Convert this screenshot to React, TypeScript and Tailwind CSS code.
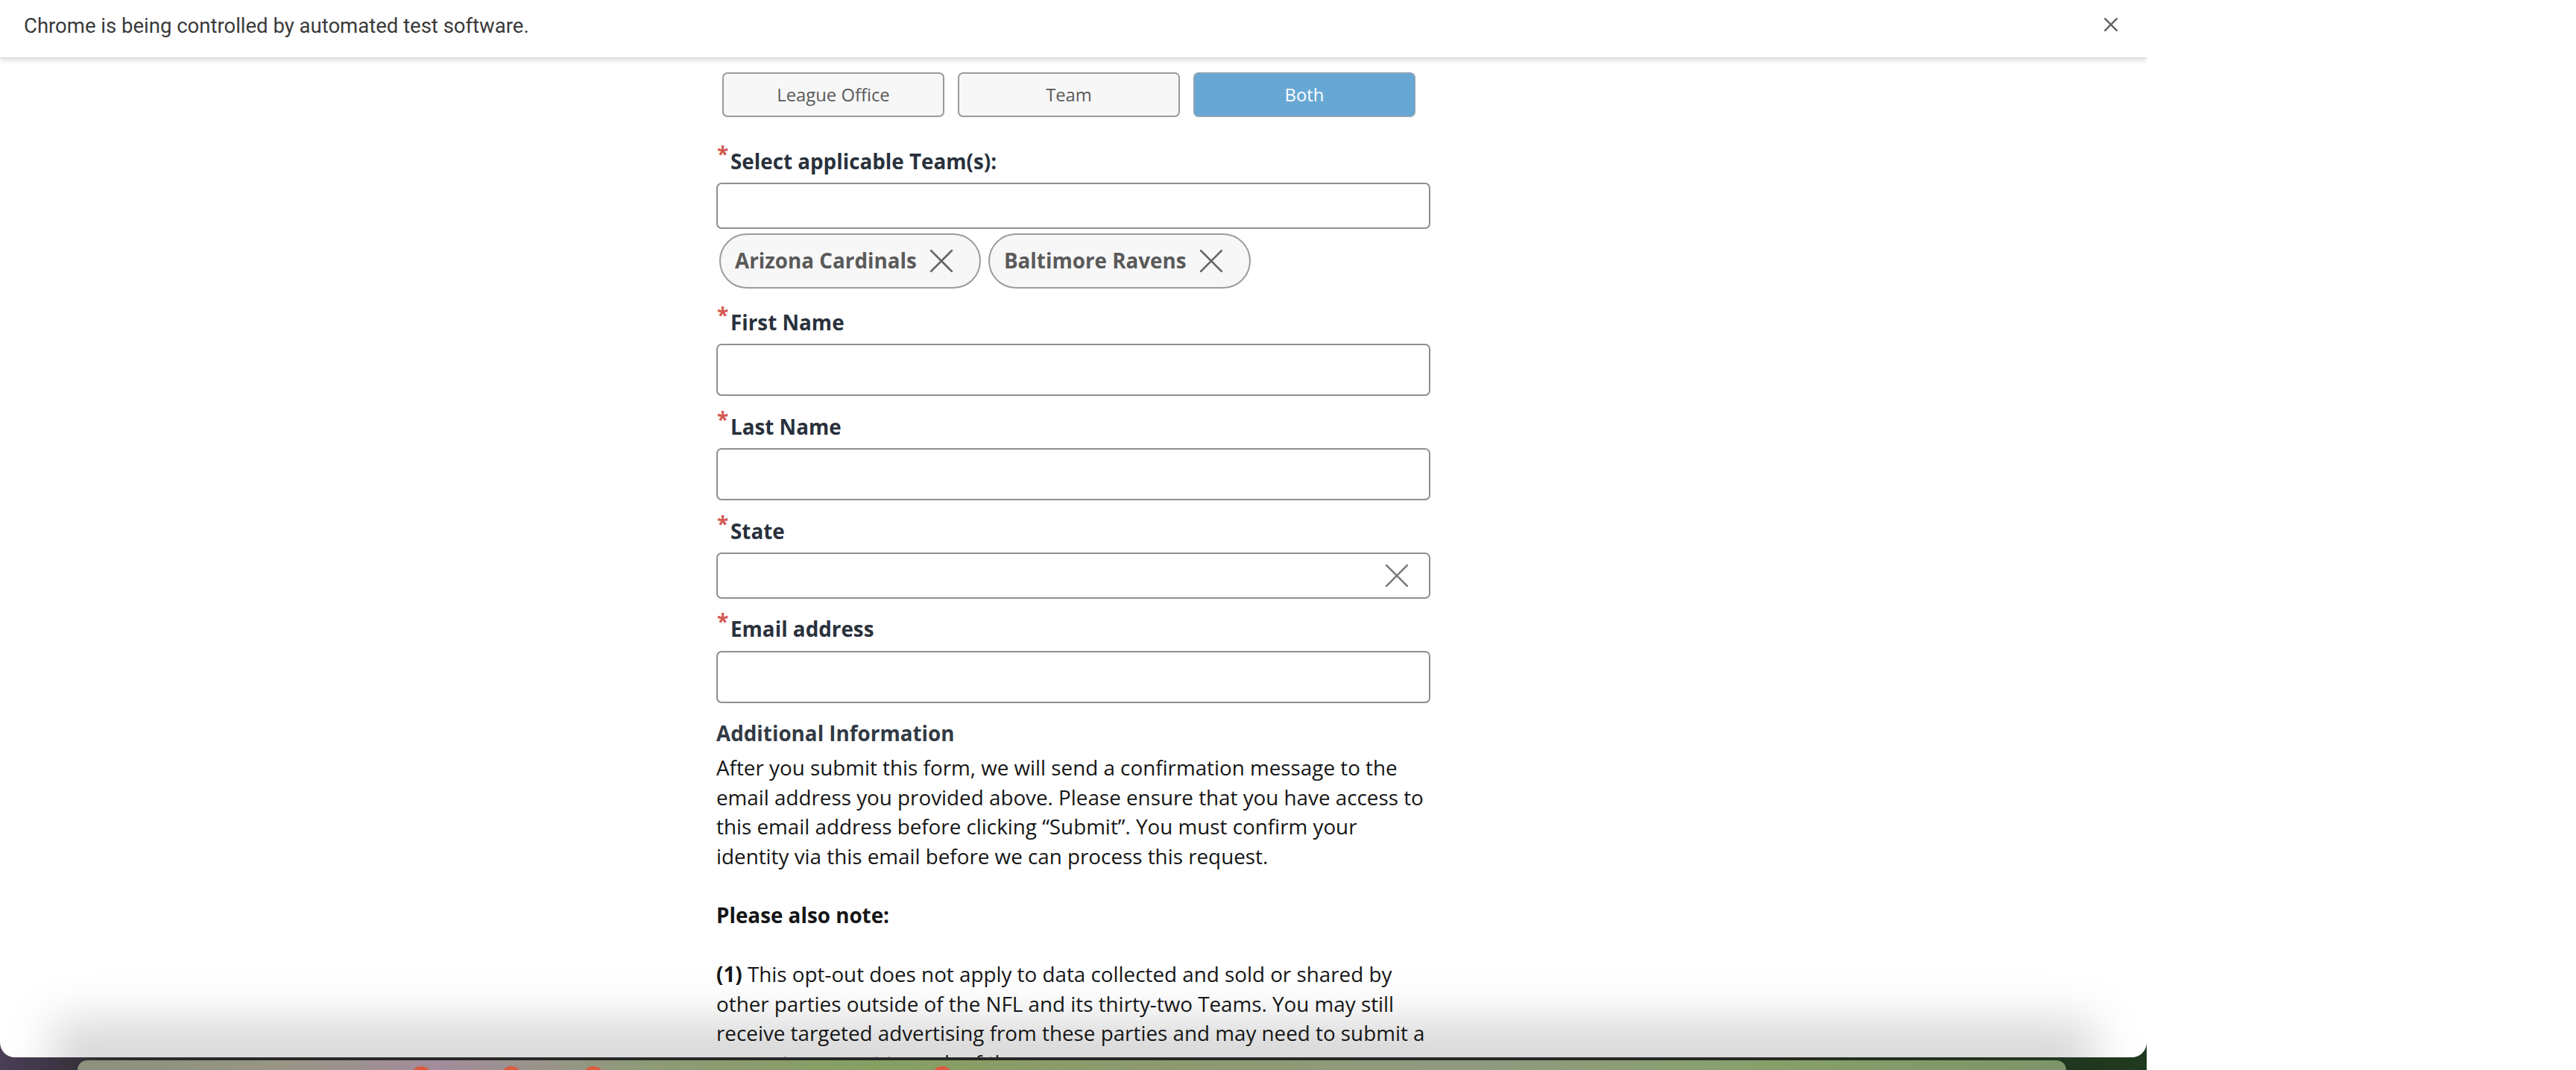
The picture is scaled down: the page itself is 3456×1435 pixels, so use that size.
import React from 'react';

// thin "x" used by chips, the state select and the infobar
function Cross({ size, color, width = 2.5 }: { size: number; color: string; width?: number }) {
  return (
    <svg width={size} height={size} viewBox="0 0 30 30" fill="none">
      <path d="M2 2L28 28M28 2L2 28" stroke={color} strokeWidth={width} strokeLinecap="round" />
    </svg>
  );
}

function Label({ text }: { text: string }) {
  return (
    <div className="flex items-start h-[36px] text-[27.8px] leading-[36px] font-bold text-[#29313c]">
      <span className="text-[28px] leading-none text-[#d4574f] mt-[-6px] w-[19px] pl-[1px]">*</span>
      <span>{text}</span>
    </div>
  );
}

function Field({ h, clear }: { h: number; clear?: boolean }) {
  return (
    <div
      className={
        'w-full border-2 border-[#8f8f8f] rounded-[7px] bg-white flex items-center justify-end pr-[27px] ' +
        (h === 62 ? 'h-[62px]' : 'h-[70px]')
      }
    >
      {clear && <Cross size={32} color="#7a7a7a" width={2.4} />}
    </div>
  );
}

function Chip({ name }: { name: string }) {
  return (
    <div className="h-[74px] flex items-center gap-[17px] rounded-full border-2 border-[#9b9b9b] bg-[#f7f7f7] pl-[19px] pr-[35px] text-[27.8px] font-bold text-[#5a5a5a]">
      <span>{name}</span>
      <Cross size={32} color="#666666" width={2.6} />
    </div>
  );
}

export default function App() {
  const toggles = ['League Office', 'Team', 'Both'];

  return (
    <div className="w-[3456px] h-[1435px] bg-white flex overflow-hidden" style={{ fontFamily: '"Open Sans", "Noto Sans", sans-serif' }}>
      {/* browser window + desktop peeking underneath */}
      <div className="w-[2880px] h-full flex flex-col bg-[linear-gradient(90deg,#4b3e57_0%,#2a2a2a_6%,#272725_80%,#1f3a1e_100%)]">
        <div className="flex-1 min-h-0 bg-white rounded-b-[20px] flex flex-col overflow-hidden relative">
          {/* automation infobar */}
          <div className="h-[78px] shrink-0 flex items-center justify-between pl-[32px] pr-[39px] border-b border-[#d6d6d6] shadow-[0_3px_7px_rgba(0,0,0,0.14)] relative z-20 bg-white">
            <span className="text-[27.5px] text-[#3a3a3a] mt-[-8px]" style={{ fontFamily: 'Roboto, "Liberation Sans", sans-serif' }}>
              Chrome is being controlled by automated test software.
            </span>
            <div className="mt-[-12px]">
              <Cross size={18} color="#5f6368" width={4} />
            </div>
          </div>

          {/* bottom fade of the window */}
          <div className="absolute left-[70px] right-[70px] bottom-[-50px] h-[100px] bg-[#d8d8d8] blur-[30px] pointer-events-none" />

          <div className="relative z-10 w-[958px] mx-auto pt-[19px]">
            <div className="flex gap-[18px] ml-[8px]">
              {toggles.map((t) => (
                <div
                  key={t}
                  className={
                    'w-[298px] h-[60px] rounded-[7px] border-2 flex items-center justify-center text-[23.8px] pt-[2px] ' +
                    (t === 'Both'
                      ? 'bg-[#67a7d4] border-[#8aa4b8] text-white'
                      : 'bg-[#f7f7f7] border-[#9a9a9a] text-[#5a5a5a]')
                  }
                >
                  {t}
                </div>
              ))}
            </div>

            <div className="mt-[41px]">
              <Label text="Select applicable Team(s):" />
            </div>
            <div className="mt-[11px]">
              <Field h={62} />
            </div>
            <div className="mt-[6px] flex gap-[10px] ml-[4px]">
              <Chip name="Arizona Cardinals" />
              <Chip name="Baltimore Ravens" />
            </div>

            <div className="mt-[27px]">
              <Label text="First Name" />
            </div>
            <div className="mt-[11px]">
              <Field h={70} />
            </div>

            <div className="mt-[23px]">
              <Label text="Last Name" />
            </div>
            <div className="mt-[11px]">
              <Field h={70} />
            </div>

            <div className="mt-[23px]">
              <Label text="State" />
            </div>
            <div className="mt-[11px]">
              <Field h={62} clear />
            </div>

            <div className="mt-[22px]">
              <Label text="Email address" />
            </div>
            <div className="mt-[12px]">
              <Field h={70} />
            </div>

            <div className="mt-[22px] text-[27.8px] leading-[36px] font-bold text-[#323a44]">Additional Information</div>

            <div className="mt-[9px] text-[27.8px] leading-[39.6px] text-[#151515]">
              <p>
                After you submit this form, we will send a confirmation message to the email address you provided
                above. Please ensure that you have access to this email address before clicking “Submit”. You must
                confirm your identity via this email before we can process this request.
              </p>
              <p className="mt-[39.6px] font-bold">Please also note:</p>
              <p className="mt-[39.6px]">
                <span className="font-bold">(1)</span> This opt-out does not apply to data collected and sold or shared
                by other parties outside of the NFL and its thirty-two Teams. You may still receive targeted advertising
                from these parties and may need to submit a separate request to each of them.
              </p>
            </div>
          </div>
        </div>

        {/* desktop strip with dock */}
        <div className="h-[17px] shrink-0 pt-[4px] pl-[104px]">
          <div className="relative w-[2668px] h-[13px] rounded-tl-[30px] rounded-tr-[30px] overflow-hidden bg-[linear-gradient(90deg,#8c917b_0%,#979584_10%,#a38c9c_18%,#8e9a78_28%,#86a062_40%,#8d9a6f_55%,#8f9a80_70%,#86a06a_85%,#7c9468_100%)]">
            <div className="absolute top-[8px] left-[447px] w-[28px] h-[28px] rounded-full bg-[#df5a3f]" />
            <div className="absolute top-[8px] left-[568px] w-[28px] h-[28px] rounded-full bg-[#df5a3f]" />
            <div className="absolute top-[8px] left-[678px] w-[28px] h-[28px] rounded-full bg-[#df5a3f]" />
            <div className="absolute top-[8px] left-[1146px] w-[28px] h-[28px] rounded-full bg-[#df5a3f]" />
          </div>
        </div>
      </div>
      <div className="flex-1 bg-white" />
    </div>
  );
}
